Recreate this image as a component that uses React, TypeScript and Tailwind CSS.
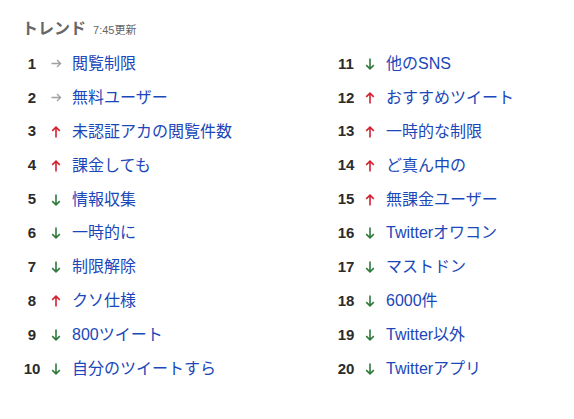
import React from "react";

type Dir = "same" | "up" | "down";
const left: [number, Dir, string][] = [
  [1, "same", "閲覧制限"],
  [2, "same", "無料ユーザー"],
  [3, "up", "未認証アカの閲覧件数"],
  [4, "up", "課金しても"],
  [5, "down", "情報収集"],
  [6, "down", "一時的に"],
  [7, "down", "制限解除"],
  [8, "up", "クソ仕様"],
  [9, "down", "800ツイート"],
  [10, "down", "自分のツイートすら"],
];
const right: [number, Dir, string][] = [
  [11, "down", "他のSNS"],
  [12, "up", "おすすめツイート"],
  [13, "up", "一時的な制限"],
  [14, "up", "ど真ん中の"],
  [15, "up", "無課金ユーザー"],
  [16, "down", "Twitterオワコン"],
  [17, "down", "マストドン"],
  [18, "down", "6000件"],
  [19, "down", "Twitter以外"],
  [20, "down", "Twitterアプリ"],
];

function Arrow({ dir }: { dir: Dir }) {
  if (dir === "same")
    return (
      <svg width="11" height="11" viewBox="0 0 11 11" fill="none" stroke="#a0a0a0" strokeWidth="1.3">
        <path d="M0.5 5.5h9M6 2l3.6 3.5L6 9" />
      </svg>
    );
  if (dir === "up")
    return (
      <svg width="10" height="12" viewBox="0 0 10 12" fill="none" stroke="#d5202f" strokeWidth="1.6">
        <path d="M5 11.5V1.2M1.2 4.9L5 1.2l3.8 3.7" />
      </svg>
    );
  return (
    <svg width="10" height="12" viewBox="0 0 10 12" fill="none" stroke="#2f7a3b" strokeWidth="1.6">
      <path d="M5 0.5v10.3M1.2 7.1L5 10.8l3.8-3.7" />
    </svg>
  );
}

function Col({ items }: { items: [number, Dir, string][] }) {
  return (
    <div className="flex flex-col w-[314px] shrink-0">
      {items.map(([n, d, t]) => (
        <div key={n} className="flex items-center h-[33.9px]">
          <div className="w-[20px] text-center text-[15px] font-bold text-[#2b2b2b]">{n}</div>
          <div className="w-[28px] flex justify-center">
            <Arrow dir={d} />
          </div>
          <div className="ml-[2px] text-[16px] text-[#1a47b9] leading-none whitespace-nowrap">{t}</div>
        </div>
      ))}
    </div>
  );
}

export default function App() {
  return (
    <div
      className="w-[574px] h-[419px] bg-white pl-[22px] pt-[17px] overflow-hidden"
      style={{ fontFamily: '"Liberation Sans", "Noto Sans CJK JP", sans-serif' }}
    >
      <div className="flex items-baseline gap-[7px] h-[20px]">
        <span className="text-[16px] font-bold text-[#666]">トレンド</span>
        <span className="text-[11px] text-[#666]">7:45更新</span>
      </div>
      <div className="flex mt-[10px]">
        <Col items={left} />
        <Col items={right} />
      </div>
    </div>
  );
}
